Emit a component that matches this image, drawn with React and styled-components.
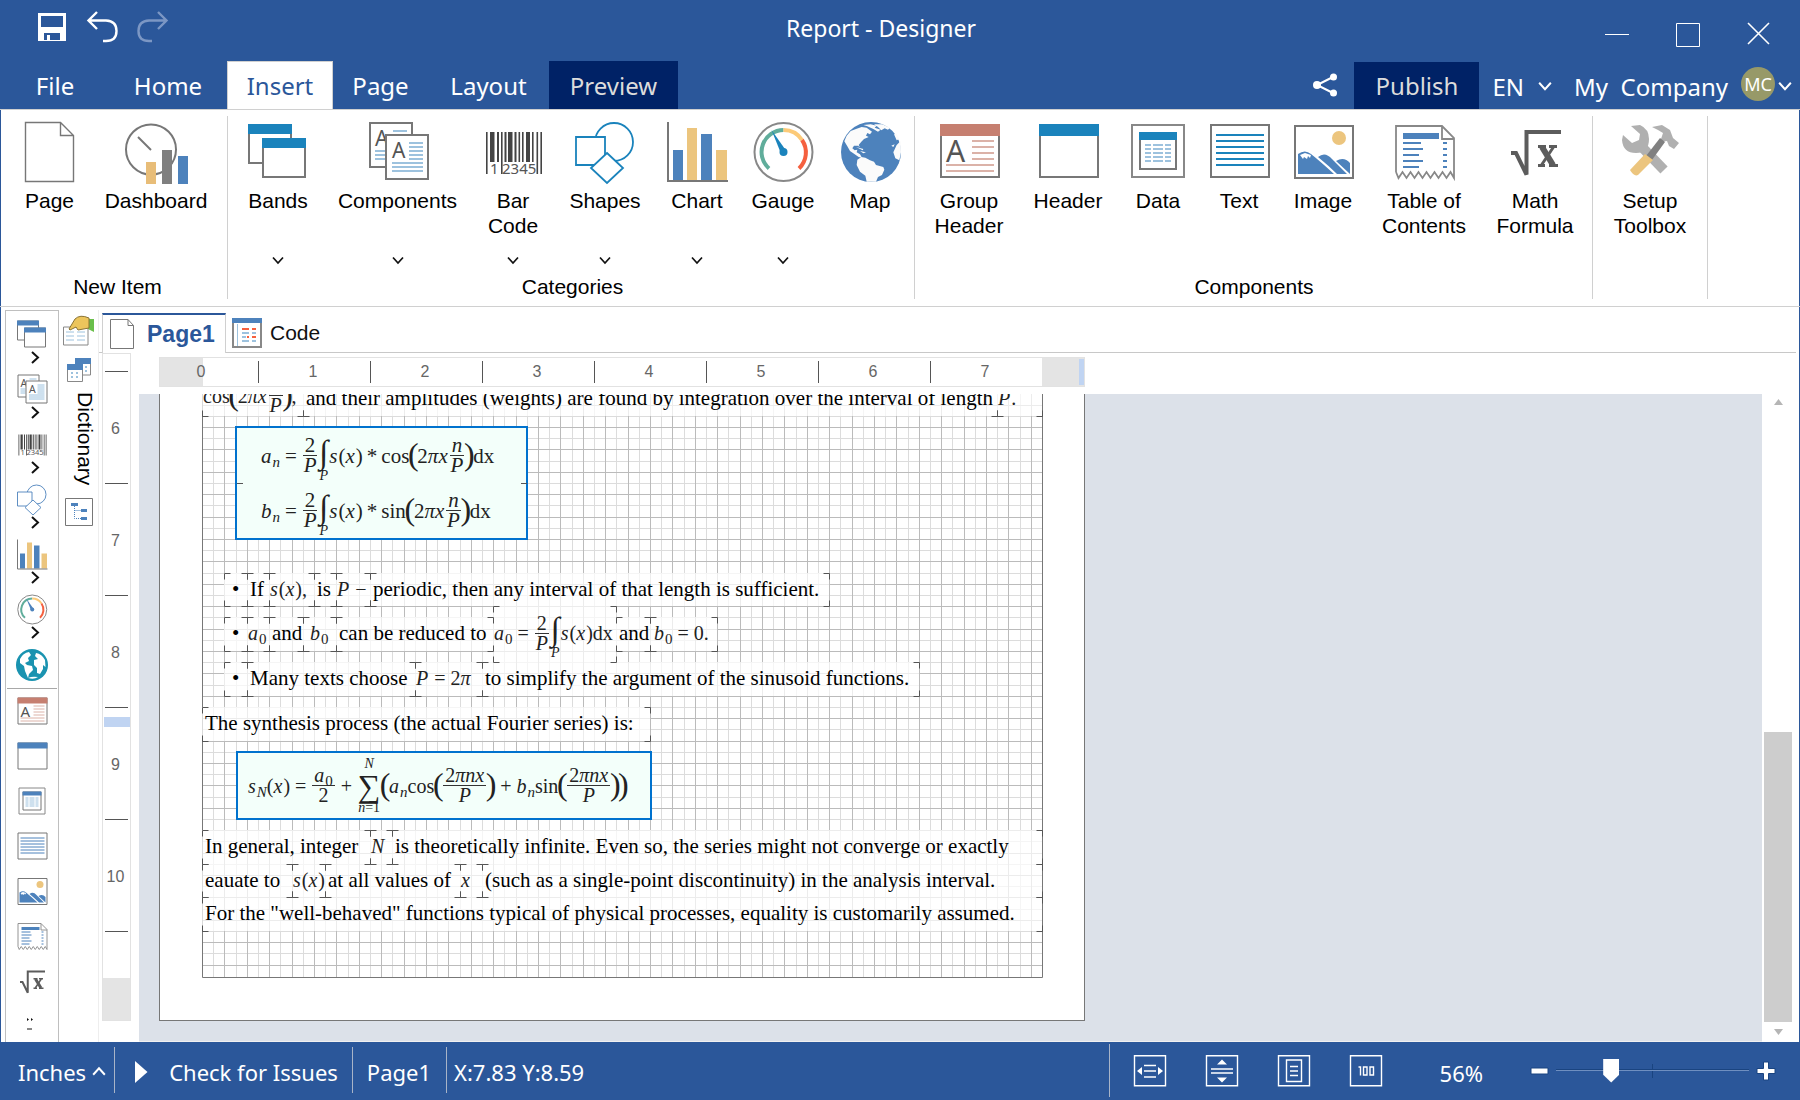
import React from "react";
import styled, { createGlobalStyle, css } from "styled-components";

const BLUE = "#2b579a";
const NAVY = "#002266";
const LINE = "#d0d0d0";
const UI = '"Noto Sans", "Open Sans", sans-serif';
const ARIAL = '"Liberation Sans", Arial, sans-serif';
const TIMES = '"Liberation Serif", "Times New Roman", serif';

const Global = createGlobalStyle`
  * { box-sizing: border-box; }
  body { margin: 0; background: #fff; }
  button { border: 0; background: none; padding: 0; margin: 0; font: inherit; color: inherit; cursor: pointer; }
  svg { display: block; overflow: visible; }
`;

/* ---------- shell ---------- */

const Window = styled.div`
  display: flex;
  flex-direction: column;
  height: 100vh;
  min-height: 720px;
  background: #fff;
  font-family: ${ARIAL};
  color: #000;
  overflow: hidden;
`;

const Row = styled.div`
  display: flex;
  align-items: center;
  gap: ${(p) => p.$gap || 0}px;
`;

/* ---------- title bar and tabs ---------- */

const Top = styled.header`
  flex: none;
  background: ${BLUE};
  color: #fff;
  font-family: ${UI};
`;

const TitleBar = styled.div`
  display: grid;
  grid-template-columns: 1fr auto 1fr;
  height: 61px;
  align-items: center;
  padding: 0 76px 6px 38px;
`;

const Title = styled.h1`
  margin: 0;
  font-size: 23px;
  font-weight: 400;
  line-height: 30px;
`;

const WindowButtons = styled(Row)`
  justify-content: flex-end;
  gap: 47px;
  margin-right: -47px;
  padding-top: 14px;
`;

const TabBar = styled.nav`
  display: flex;
  height: 48px;
  padding: 0 8px 0 1px;
`;

const Tab = styled.button`
  width: ${(p) => p.$w}px;
  font-size: 24px;
  color: #fff;
  border: 1px solid transparent;
  border-bottom: 0;
  line-height: 46px;
  ${(p) => p.$active && css`background: #fff; color: ${BLUE}; border-color: ${LINE};`}
  ${(p) => p.$dark && css`background: ${NAVY}; color: #dcdcdc; border-color: ${NAVY};`}
`;

const Account = styled.div`
  display: flex;
  align-items: center;
  margin-left: auto;
  font-size: 24px;
`;

const ShareButton = styled.button`
  padding: 0 17px;
`;

const Language = styled.button`
  display: flex;
  align-items: center;
  gap: 14px;
  padding: 2px 0 0 13px;
`;

const Company = styled.button`
  display: flex;
  align-items: center;
  gap: 13px;
  padding: 2px 0 0 22px;
  white-space: pre;
`;

const Avatar = styled.span`
  display: grid;
  place-items: center;
  width: 34px;
  height: 34px;
  margin: 0 -10px 4px 0;
  border-radius: 50%;
  background: #979968;
  font-size: 18px;
`;

/* ---------- ribbon ---------- */

const Ribbon = styled.section`
  flex: none;
  display: flex;
  height: 198px;
  padding: 6px 0 7px 1px;
  border: solid ${LINE};
  border-width: 1px 0;
  box-shadow: inset 1px 0 ${BLUE}, inset -1px 0 ${BLUE};
`;

const Group = styled.div`
  display: flex;
  flex-direction: column;
  padding: 5px ${(p) => p.$right}px 0 ${(p) => p.$left}px;
  border-right: 1px solid ${LINE};
`;

const Tools = styled.div`
  display: flex;
  flex: 1;
`;

const Tool = styled.button`
  display: flex;
  flex-direction: column;
  align-items: center;
  width: ${(p) => p.$w}px;
  font-size: 21px;
  line-height: 25px;
  text-align: center;
`;

const ToolLabel = styled.span`
  height: 71px;
  padding-top: 3px;
`;

const GroupLabel = styled.div`
  height: 25px;
  font-size: 21px;
  line-height: 25px;
  text-align: center;
`;

/* ---------- side panels ---------- */

const Main = styled.main`
  flex: 1;
  display: flex;
  min-height: 0;
  padding: 3px 4px 0 5px;
  box-shadow: inset 1px 0 ${BLUE}, inset -1px 0 ${BLUE};
`;

const Toolbox = styled.aside`
  flex: none;
  width: 54px;
  padding: 8px 1px 0;
  border: 1px solid #bfbfbf;
  border-bottom: 0;
  overflow: hidden;
`;

const BoxTool = styled.button`
  display: flex;
  flex-direction: column;
  align-items: center;
  width: 100%;
  height: ${(p) => p.$h}px;
  color: #4d82bc;
`;

const BoxRule = styled.hr`
  height: 1px;
  margin: 0 0 7px;
  border: 0;
  background: #a8a8a8;
`;

const Dock = styled.aside`
  flex: none;
  display: flex;
  flex-direction: column;
  align-items: center;
  width: 39px;
  padding-top: 3px;
`;

const DockTab = styled.button`
  display: flex;
  flex-direction: column;
  align-items: center;
  gap: 10px;
  padding: 11px 0 13px;
  font-size: 21px;
  line-height: 24px;
`;

const Vertical = styled.span`
  padding-left: 12px;
  margin-right: -1px;
  writing-mode: vertical-rl;
`;

/* ---------- workspace ---------- */

const Workspace = styled.section`
  flex: 1;
  display: flex;
  flex-direction: column;
  min-width: 0;
  border-left: 1px solid #eee;
`;

const PageTabs = styled.div`
  display: flex;
  flex: none;
  height: 43px;
  padding: 3px 0 0 3px;
  box-shadow: inset 0 -1px #c8c8c8;
`;

const PageTab = styled.button`
  display: flex;
  align-items: center;
  width: ${(p) => (p.$active ? 124 : 110)}px;
  padding: 0 0 0 ${(p) => (p.$active ? 7 : 6)}px;
  gap: ${(p) => (p.$active ? 13 : 8)}px;
  font-size: 21px;
  color: #111;
  ${(p) =>
    p.$active &&
    css`
      font-size: 23px;
      font-weight: 700;
      color: ${BLUE};
      background: #fff;
      border: 1px solid ${LINE};
      border-top: 2px solid ${BLUE};
      border-bottom: 0;
    `}
`;

const Surface = styled.div`
  flex: 1;
  display: grid;
  grid-template-columns: 40px minmax(0, 1fr) 34px;
  grid-template-rows: 41px minmax(0, 1fr);
  min-height: 0;
`;

const rulerBox = css`
  display: flex;
  border: 1px solid #e2e2e2;
  font-size: 16px;
  color: #666;
`;

const RulerX = styled.div`
  ${rulerBox}
  position: relative;
  grid-column: 2;
  width: 926px;
  height: 30px;
  margin: 4px 0 0 20px;
  padding-left: 43px;
  background: linear-gradient(90deg, #e4e4e4 43px, #fff 43px 882px, #e4e4e4 882px);
`;

const MarkX = styled.span`
  flex: none;
  width: ${(p) => (p.$last ? 56 : 112)}px;
  line-height: 28px;
  background: ${(p) => (p.$last ? "none" : "linear-gradient(#555, #555) 55px 3px / 1px 22px no-repeat")};
`;

const MarkXText = styled.span`
  display: block;
  width: 12px;
  margin-left: -8px;
  text-align: center;
`;

const CursorX = styled.span`
  position: absolute;
  right: 0;
  top: 1px;
  width: 5px;
  height: 26px;
  background: #c0d4f2;
`;

const RulerY = styled.div`
  ${rulerBox}
  position: relative;
  flex-direction: column;
  grid-row: 1 / 3;
  grid-column: 1;
  width: 29px;
  height: 668px;
  margin: 0 0 0 3px;
  padding-top: 17px;
  background: linear-gradient(#fff 624px, #e4e4e4 624px);
`;

const MarkY = styled.span`
  flex: none;
  height: ${(p) => (p.$last ? 1 : 112)}px;
  padding-right: 2px;
  line-height: 115px;
  text-align: center;
  background: linear-gradient(#555, #555) 2px 0 / 23px 1px no-repeat;
`;

const CursorY = styled.span`
  position: absolute;
  left: 1px;
  top: 363px;
  width: 26px;
  height: 10px;
  background: #c0d4f2;
`;

const Canvas = styled.div`
  grid-column: 2;
  grid-row: 2;
  overflow: hidden;
  background: #dce1e9;
  border-bottom: 1px solid #f0f0f0;
`;

const Sheet = styled.div`
  width: 926px;
  height: 627px;
  margin-left: 20px;
  padding: 0 42px;
  background: #fff;
  border: 1px solid #777;
  border-top: 0;
`;

const Printable = styled.div`
  position: relative;
  width: 841px;
  height: 584px;
  font-family: ${TIMES};
  overflow: hidden;
`;

const Layer = styled.svg`
  position: absolute;
  left: 0;
  top: 0;
  pointer-events: none;
`;

/* Report coordinates are grid cells of 0.1 inch; the view shows 11.2 px per cell. */
const cx = (c) => Math.round(c * 11.2);
const cy = (r) => Math.round(r * 11.2 - 0.6);

const Item = styled.div`
  position: absolute;
  left: ${(p) => cx(p.$c0)}px;
  top: ${(p) => cy(p.$r0)}px;
  width: ${(p) => cx(p.$c1) - cx(p.$c0)}px;
  height: ${(p) => cy(p.$r1) - cy(p.$r0)}px;
  display: flex;
  align-items: center;
  padding: 0 0 2px ${(p) => (p.$math ? 1 : 3)}px;
  font-size: ${(p) => (p.$math ? 20 : 21)}px;
  line-height: 24px;
  white-space: nowrap;
  color: ${(p) => (p.$math ? "#222" : "#000")};
  background: rgba(255, 255, 255, 0.72);
`;

const FormulaPanel = styled.div`
  position: absolute;
  left: ${(p) => cx(p.$c0) - 1}px;
  top: ${(p) => cy(p.$r0) - 1}px;
  width: ${(p) => cx(p.$c1) - cx(p.$c0) + 2}px;
  height: ${(p) => cy(p.$r1) - cy(p.$r0) + 2}px;
  display: flex;
  flex-direction: column;
  padding-left: ${(p) => p.$pad}px;
  border: 2px solid #0072ce;
  background: #f3fffa;
  color: #222;
  font-size: ${(p) => p.$size}px;
  line-height: 24px;

  > * {
    flex: 1;
  }
`;

/* ---------- math typesetting ---------- */

const Expr = styled.span`
  display: flex;
  align-items: center;
  white-space: pre;
`;
const V = styled.i`
  padding-right: 1px;
`;
const Sub = styled.sub`
  font-size: 15px;
  line-height: 0;
  vertical-align: -4px;
`;
const Op = styled.span`
  padding: 0 ${(p) => p.$p || 5}px;
`;
const FracBox = styled.span`
  display: inline-flex;
  flex-direction: column;
  align-items: center;
  margin: 0 1px;
  line-height: 19px;
  text-align: center;
`;
const Num = styled.span`
  align-self: stretch;
  padding: 0 2px;
  border-bottom: 1px solid #333;
`;
const Big = styled.span`
  width: 8px;
  font-size: 32px;
  line-height: 24px;
  padding-bottom: 4px;
  display: flex;
  justify-content: center;
`;
const IntegralBox = styled.span`
  display: flex;
  flex-direction: column;
  align-items: center;
  width: 11px;
  padding-top: 4px;
  font-size: 14px;
  line-height: 12px;
`;
const IntegralSign = styled.span`
  font-size: 33px;
  line-height: 36px;
`;
const SumBox = styled.span`
  display: flex;
  flex-direction: column;
  align-items: center;
  width: 24px;
  font-size: 14px;
  line-height: 14px;
`;
const SumSign = styled.span`
  font-size: 32px;
  line-height: 30px;
`;

const Frac = ({ top, bottom }) => (
  <FracBox>
    <Num>{top}</Num>
    <span>{bottom}</span>
  </FracBox>
);
const Integral = () => (
  <IntegralBox>
    <IntegralSign>∫</IntegralSign>
    <i>P</i>
  </IntegralBox>
);
const Fx = ({ name, sub }) => (
  <span>
    <V>{name}</V>
    {sub && <Sub>{sub}</Sub>}(<V>x</V>)
  </span>
);
const Coef = ({ name, sub }) => (
  <span>
    <V>{name}</V>
    <Sub>{sub}</Sub>
  </span>
);

const Coefficient = ({ name, fn }) => (
  <Expr>
    <Coef name={name} sub={<i>n</i>} />
    <Op>=</Op>
    <Frac top="2" bottom={<i>P</i>} />
    <Integral />
    <Fx name="s" />
    <Op $p={4}>*</Op>
    {fn}
    <Big>(</Big>
    <span>2<V>πx</V></span>
    <Frac top={<i>n</i>} bottom={<i>P</i>} />
    <Big>)</Big>dx
  </Expr>
);

const Harmonic = ({ name, fn }) => (
  <>
    <Coef name={name} sub={<i>n</i>} />
    {fn}
    <Big>(</Big>
    <Frac top={<>2<i>πnx</i></>} bottom={<i>P</i>} />
    <Big>)</Big>
  </>
);

/* ---------- report content ---------- */

const ITEMS = [
  [0, 9, -1.5, 2, <Expr key="c">cos<Big>(</Big><span>2<V>πx</V></span><Frac top={<i>n</i>} bottom={<i>P</i>} /><Big>)</Big>,</Expr>, 1],
  [9, 71, -1, 2, "and their amplitudes (weights) are found by integration over the interval of length"],
  [71, 75, -1, 2, <span key="p"><V>P</V>.</span>, 1],

  [2, 4, 16, 19, "bullet"],
  [4, 6, 16, 19, "If"],
  [6, 10, 16, 19, <span key="s"><Fx name="s" />,</span>, 1],
  [10, 12, 16, 19, "is"],
  [12, 15, 16, 19, <span key="m"><V>P</V> −</span>, 1],
  [15, 56, 16, 19, "periodic, then any interval of that length is sufficient."],

  [2, 4, 20, 23, "bullet"],
  [4, 6, 20, 23, <Coef key="a" name="a" sub="0" />, 1],
  [6, 9, 20, 23, "and"],
  [9, 12, 20, 23, <Op key="b" $p={6}><Coef name="b" sub="0" /></Op>, 1],
  [12, 26, 20, 23, "can be reduced to"],
  [26, 37, 19, 24, <Expr key="i"><Coef name="a" sub="0" /><Op>=</Op><Frac top="2" bottom={<i>P</i>} /><Integral /><Fx name="s" />dx</Expr>, 1],
  [37, 40, 20, 23, "and"],
  [40, 46, 20, 23, <Op key="z" $p={3}><Coef name="b" sub="0" /> = 0.</Op>, 1],

  [2, 4, 24, 27, "bullet"],
  [4, 19, 24, 27, "Many texts choose"],
  [19, 25, 24, 27, <span key="q"><V>P</V> = 2<V>π</V></span>, 1],
  [25, 64, 24, 27, "to simplify the argument of the sinusoid functions."],

  [0, 40, 28, 31, "The synthesis process (the actual Fourier series) is:"],

  [0, 15, 39, 42, "In general, integer"],
  [15, 17, 39, 42, <V key="n">N</V>, 1],
  [17, 75, 39, 42, "is theoretically infinite. Even so, the series might not converge or exactly"],
  [0, 8, 42, 45, "eauate to"],
  [8, 11, 42, 45, <Fx key="f" name="s" />, 1],
  [11, 23, 42, 45, "at all values of"],
  [23, 25, 42, 45, <V key="x">x</V>, 1],
  [25, 75, 42, 45, "(such as a single-point discontinuity) in the analysis interval."],
  [0, 75, 45, 48, 'For the "well-behaved" functions typical of physical processes, equality is customarily assumed.'],
];

const Bullet = styled.span`
  padding-left: 5px;
`;

function Grid() {
  const lines = [];
  for (const major of [false, true]) {
    for (let c = 1; c < 75; c += 1)
      if ((c % 2 === 0) === major)
        lines.push(<rect key={`c${c}`} x={cx(c)} y="0" width="1" height="583" fill={major ? "#bbb" : "#dcdcdc"} />);
    for (let r = 1; r < 52; r += 1)
      if ((r % 2 === 1) === major)
        lines.push(<rect key={`r${r}`} x="0" y={cy(r)} width="840" height="1" fill={major ? "#bbb" : "#dcdcdc"} />);
  }
  return (
    <Layer width="841" height="584" aria-hidden="true">
      {lines}
      <path d="M.5 0V583.5H840.5V0" fill="none" stroke="#777" />
    </Layer>
  );
}

function Corners() {
  const d = ITEMS.map(([c0, c1, r0, r1]) => {
    const [l, r, t, b] = [cx(c0) + 0.5, cx(c1) + 0.5, cy(r0) + 0.5, cy(r1) + 0.5];
    return `M${l} ${t + 6}V${t}H${l + 6}M${r - 6} ${t}H${r}V${t + 6}M${l} ${b - 6}V${b}H${l + 6}M${r - 6} ${b}H${r}V${b - 6}`;
  }).join("");
  return (
    <Layer width="841" height="584" aria-hidden="true">
      <path d={d} fill="none" stroke="#555" />
      <path d="M35 89.5H41M319 89.5H325" stroke="#555" />
    </Layer>
  );
}

/* ---------- icons, drawn on a 64 unit square ---------- */

const Icon = ({ name, size = 64 }) => (
  <svg width={size} height={size} viewBox="0 0 64 64" fill="none" aria-hidden="true">
    {ICONS[name]}
  </svg>
);

const G = "#777";
const Y = "#ecc57e";
const B = "#4d82bc";
const Hlines = ({ x1, x2, ys, c, w = 2 }) => (
  <path d={ys.map((y) => `M${x1} ${y}H${x2}`).join("")} stroke={c} strokeWidth={w} />
);
const Letter = ({ x, y, s, children = "A", ...rest }) => (
  <text x={x} y={y} fontSize={s} fontFamily={UI} fill="#555" {...rest}>{children}</text>
);

const ICONS = {
  page: (
    <path d="M7.5 1.5H42.5L55.5 14.5V60.5H7.5ZM42.5 1.5V14.5H55.5" stroke={G} strokeWidth="1.4" />
  ),
  dashboard: (
    <>
      <circle cx="27" cy="28.5" r="25" stroke={G} strokeWidth="2" />
      <path d="M14 16L27 29" stroke={G} strokeWidth="2" />
      <path d="M22 41h10v22h-10z" fill="#e8bd78" />
      <path d="M38 29h10v34h-10z" fill="#7f7f7f" />
      <path d="M54 35h10v28h-10z" fill={B} />
    </>
  ),
  bands: (
    <>
      <path d="M3 4H45V42H3Z" stroke={G} strokeWidth="2" fill="#fff" />
      <path d="M2 3h44v10H2z" fill="currentColor" />
      <path d="M17 18H59V56H17Z" stroke={G} strokeWidth="2" fill="#fff" />
      <path d="M16 17h44v10H16z" fill="currentColor" />
    </>
  ),
  components: (
    <>
      <path d="M4 2H46V46H4Z" stroke={G} strokeWidth="2" fill="#fff" />
      <Letter x="9" y="25" s="21" />
      <Hlines x1={27} x2={41} ys={[10]} c="#9dc2de" />
      <Hlines x1={9} x2={19} ys={[30, 34, 38]} c="#9dc2de" />
      <path d="M20 14H62V58H20Z" stroke={G} strokeWidth="2" fill="#fff" />
      <Letter x="26" y="37" s="21" />
      <Hlines x1={43} x2={57} ys={[22, 26, 30, 34, 38]} c="#9dc2de" />
      <Hlines x1={26} x2={57} ys={[42, 46, 50]} c="#9dc2de" />
    </>
  ),
  barcode: (
    <>
      <path
        d="M5 11h1.6v42H5zM9 11h4.5v30H9zM16 11h2v30h-2zM20 11h1.6v42H20zM23.5 11h2v30h-2zM27 11h4.5v30H27zM33.5 11h2v30h-2zM37.5 11h1.6v30h-1.6zM41 11h1.6v30H41zM45 11h4v30h-4zM51 11h1.6v30H51zM55.5 11h1.6v42h-1.6zM59.4 11h1.6v42h-1.6z"
        fill="#444"
      />
      <Letter x="9" y="52.5" s="15">1</Letter>
      <Letter x="21" y="52.5" s="15">2345</Letter>
    </>
  ),
  shapes: (
    <g stroke="currentColor" strokeWidth="1.8" fill="#fff">
      <circle cx="41" cy="21" r="19" />
      <path d="M3 16H32V44H3Z" />
      <path d="M34 32L50 47L34 62L18 47Z" />
    </g>
  ),
  chart: (
    <>
      <path d="M8 29h10v30H8zM36 13h11v46H36z" fill={B} />
      <path d="M22 7h10v52H22zM51 29h11v30H51z" fill={Y} />
      <path d="M3 1V60H63" stroke={G} strokeWidth="2" />
    </>
  ),
  gauge: (
    <>
      <circle cx="32.500" cy="31" r="29" stroke="#888" strokeWidth="2" />
      <path d="M18 47.5A22 22 0 0 1 32.500 9" stroke="#60ad9b" strokeWidth="4" />
      <path d="M32.500 9A22 22 0 0 1 51 19" stroke="#fcca78" strokeWidth="4" />
      <path d="M51 19A22 22 0 0 1 48 47.5" stroke="#f5603f" strokeWidth="4" />
      <path d="M20.500 9L35 29.5L30 32.5Z" fill="currentColor" />
      <circle cx="32.500" cy="31" r="4" fill="currentColor" />
    </>
  ),
  map: (
    <>
      <circle cx="33" cy="31" r="30" fill={B} />
      <g transform="translate(33 31) scale(.3333) translate(-363 -111)" fill="#fbfbfb">
        <path d="M283 79L290 62L302 48L318 42L335 36L350 38L358 44L366 50L360 58L352 54L348 62L356 66L342 72L334 80L326 90L330 97L324 92L312 92L307 100L314 106L322 104L320 112L330 118L336 128L326 126L312 116L300 108L292 94Z" />
        <path d="M340 30L362 28L380 32L374 38L392 44L384 50L370 42L352 34ZM372 28L396 28L420 38L414 44L404 40L394 46L384 36ZM318 96L340 102L338 106ZM330 108L348 112L340 115Z" />
        <path d="M322 134L334 126L346 128L360 136L372 140L378 150L400 156L403 164L396 180L384 186L378 200L350 200L346 182L330 170L320 150Z" />
        <path d="M452 78L440 90L430 112L436 130L448 136L453 112ZM424 92L434 88L430 96ZM432 58L440 56L448 72L440 76Z" />
      </g>
    </>
  ),
  groupHeader: (
    <>
      <path d="M4 4H62V56H4Z" stroke={G} strokeWidth="2" fill="#fff" />
      <path d="M3 3h60v12H3z" fill="#c67f70" />
      <Letter x="9" y="41" s="30" />
      <Hlines x1={35} x2={57} ys={[20, 26, 32, 38]} c="#dbb2a8" />
      <Hlines x1={9} x2={57} ys={[44, 50]} c="#dbb2a8" />
    </>
  ),
  header: (
    <>
      <path d="M4 4H62V56H4Z" stroke={G} strokeWidth="2" fill="#fff" />
      <path d="M3 3h60v12H3z" fill="currentColor" />
    </>
  ),
  data: (
    <>
      <path d="M6 4H58V56H6Z" stroke="#888" strokeWidth="2" fill="#fff" />
      <path d="M14 12H50V48H14Z" stroke={G} strokeWidth="2" fill="#fff" />
      <path d="M13 11h38v8H13z" fill="currentColor" />
      {[24, 28, 32, 36, 40].map((y) => (
        <path key={y} d={`M19 ${y}h6m2 0h10m2 0h6`} stroke="#9dc2de" strokeWidth="2" />
      ))}
    </>
  ),
  text: (
    <>
      <path d="M4 4H62V56H4Z" stroke={G} strokeWidth="2" fill="#fff" />
      <Hlines x1={9} x2={57} ys={[14, 20, 26, 32, 38, 44]} c="currentColor" />
    </>
  ),
  image: (
    <>
      <path d="M4 5H62V57H4Z" stroke={G} strokeWidth="2" fill="#fff" />
      <circle cx="48" cy="17" r="7" fill={Y} />
      <path d="M7 53V33Q14 28 20 33Q30 41 43 53ZM27 36Q34 30 41 38L56 53H46Q38 45 27 36ZM45 40Q53 35 59 42V53Z" fill={B} />
      <path d="M9 34L14 32L20 34L19 37L17 35L16 38L13 36L12 38Z" fill="#fff" />
    </>
  ),
  toc: (
    <>
      <path
        d="M4 51V5H50L62 17V57L58.500 51L54.500 57L50.500 51L46.500 57L42.500 51L38.500 57L34.500 51L30.500 57L26.500 51L22.500 57L18.500 51L14.500 57L10.500 51L6.500 57L4 51M50 5V18H62"
        stroke="#888"
        strokeWidth="1.8"
      />
      <path d="M11 12h36v6H11z" fill={B} />
      <path d="M11 22h18M11 28h20M11 34h16M11 40h20M11 46h16M51 22h4M51 28h4M51 34h4M51 40h4M51 46h4" stroke={B} strokeWidth="2" />
    </>
  ),
  math: (
    <>
      <path d="M8 32H13L23.500 53.500V11H58" stroke="#5c5c5c" strokeWidth="4" />
      <path d="M35 25.500H43M46 25.500H54M35 44.500H42M46 44.500H55" stroke="#5c5c5c" strokeWidth="3" />
      <path d="M39 26L50 44" stroke="#5c5c5c" strokeWidth="6" />
      <path d="M50.500 26L38.500 44" stroke="#5c5c5c" strokeWidth="3" />
    </>
  ),
  setup: (
    <>
      <path d="M22 24L46 49" stroke="#b0b0b0" strokeWidth="10" />
      <path d="M13 5L22 4Q31 8 31 18Q31 32 18 32Q5 32 4 19L5 14L14 22L21 19L22 13Z" fill="#b0b0b0" />
      <path d="M34 6L44 4L52 9L55 17L61 22L56 28L51 25L49 20L42 21L45 12L40 9Z" fill="#b0b0b0" />
      <path d="M28 35L42 17L47 21L34 39Z" fill="#808080" />
      <path d="M12 49L27 33L35 39L20 54Q16 56 12 49Z" fill={Y} />
    </>
  ),
  globe: (
    <>
      <circle cx="32" cy="32" r="32" fill="#1a93b0" />
      <path d="M8 20Q14 8 26 6L30 12L24 18L26 24L18 28L22 32L32 34L34 42L26 50L24 58L18 44L16 34L8 28Z" fill="#fff" />
      <path d="M40 8Q52 10 58 22L59 36L54 32L54 40L48 50L42 48L42 38L36 32L36 22L44 20L38 14Z" fill="#fff" />
      <path d="M24 58Q32 54 44 56Q36 62 24 58Z" fill="#fff" />
    </>
  ),
};

const Chevron = ({ dir = "down", w = 12, color = "#111" }) => {
  const d = { down: "M1 1.500L6 7L11 1.500", up: "M1 7.500L6 2L11 7.500" }[dir];
  return (
    <svg width={w} height={(w * 9) / 12} viewBox="0 0 12 9" aria-hidden="true">
      <path d={d} fill="none" stroke={color} strokeWidth="1.700" />
    </svg>
  );
};

const BoxChevron = styled.svg`
  margin-left: 6px;
`;

const NEW_ITEM = [["page", "Page", 77], ["dashboard", "Dashboard", 136]];
const CATEGORIES = [
  ["bands", "Bands", 86, 1],
  ["components", "Components", 153, 1],
  ["barcode", "Bar Code", 78, 1],
  ["shapes", "Shapes", 106, 1],
  ["chart", "Chart", 78, 1],
  ["gauge", "Gauge", 94, 1],
  ["map", "Map", 80],
];
const COMPONENTS = [
  ["groupHeader", "Group Header", 98],
  ["header", "Header", 100],
  ["data", "Data", 80],
  ["text", "Text", 82],
  ["image", "Image", 86],
  ["toc", "Table of Contents", 116],
  ["math", "Math Formula", 106],
];

const ToolColor = styled.div`
  display: contents;
  color: #1a83bc;
`;

const Black = styled.span`
  color: #000;
`;

const RibbonGroup = ({ label, tools, left, right }) => (
  <Group $left={left} $right={right}>
    <Tools>
      {tools.map(([icon, text, w, menu]) => (
        <ToolColor key={text}>
          <Tool $w={w}>
            <Icon name={icon} />
            <ToolLabel><Black>{text}</Black></ToolLabel>
            {menu && <Chevron />}
          </Tool>
        </ToolColor>
      ))}
    </Tools>
    <GroupLabel>{label}</GroupLabel>
  </Group>
);

/* ---------- scroll bar ---------- */

const ScrollBar = styled.div`
  grid-column: 3;
  grid-row: 2;
  display: flex;
  flex-direction: column;
  align-items: center;
  padding: 5px 4px 7px 2px;
`;
const Track = styled.div`
  flex: 1;
  display: flex;
  flex-direction: column;
  justify-content: flex-end;
  width: 28px;
  padding: 6px 0 7px;
`;
const Thumb = styled.div`
  flex: 0 0 290px;
  background: #cdcdcd;
`;

/* ---------- status bar ---------- */

const Status = styled.footer`
  flex: none;
  display: flex;
  height: 58px;
  padding-right: 24px;
  background: ${BLUE};
  color: #fff;
  font-family: ${UI};
  font-size: 22px;
`;
const Cell = styled.div`
  display: flex;
  align-items: center;
  margin: 5px 0 7px;
  padding: 3px ${(p) => p.$r}px 0 ${(p) => p.$l}px;
  border-right: ${(p) => (p.$last ? 0 : 1)}px solid #a8b4c8;
`;
const StatusButton = styled.button`
  display: flex;
  align-items: center;
  gap: ${(p) => p.$gap}px;
`;
const ZoomCell = styled.div`
  display: flex;
  align-items: center;
  margin: 2px 0 3px auto;
  padding-left: 23px;
  border-left: 1px solid #a8b4c8;
`;
const ZoomValue = styled.label`
  margin: 4px 47px 0 57px;
`;
const Views = styled(Row)`
  gap: 38px;
`;
const Slider = styled.input`
  appearance: none;
  width: 193px;
  height: 26px;
  margin: 0 7px 0 7px;
  background: linear-gradient(#1a4480, #1a4480) 0 11px / 100% 1px no-repeat,
    linear-gradient(#6f8fc0, #6f8fc0) 0 12px / 100% 1px no-repeat,
    linear-gradient(#1a4480, #1a4480) 50% 6px / 1px 14px no-repeat;
  &::-webkit-slider-thumb {
    appearance: none;
    width: 16px;
    height: 24px;
    background: #fff;
    clip-path: polygon(0 0, 100% 0, 100% 68%, 50% 100%, 0 68%);
  }
`;

const ViewIcon = ({ children }) => (
  <svg width="34" height="32" viewBox="0 0 34 32" fill="none" stroke="#fff" strokeWidth="1.400" aria-hidden="true">
    <path d="M1.500 .7H32.500V30.700H1.500Z" />
    {children}
  </svg>
);

export default function App() {
  return (
    <Window>
      <Global />
      <Top>
        <TitleBar>
          <Row $gap={20}>
            <button aria-label="Save">
              <svg width="28" height="30" viewBox="0 0 28 30" aria-hidden="true">
                <path d="M0 0H28V28H0ZM3 3V14H25V3ZM6 20V27H22V20Z" fill="#fff" fillRule="evenodd" />
                <path d="M9 22h3v5H9z" fill="#fff" />
              </svg>
            </button>
            <button aria-label="Undo">
              <svg width="31" height="32" viewBox="0 0 31 32" fill="none" stroke="#fff" strokeWidth="2.400" aria-hidden="true">
                <path d="M11 0L2.500 8.500L11 17M3 8.500H20Q30.500 9 30.500 19T20 29H17" />
              </svg>
            </button>
            <button aria-label="Redo" disabled>
              <svg width="31" height="32" viewBox="0 0 31 32" fill="none" stroke="#7c97c4" strokeWidth="2.400" aria-hidden="true">
                <path d="M21 0L29.500 8.500L21 17M29 8.500H12Q1.500 9 1.500 19T12 29H15" />
              </svg>
            </button>
          </Row>
          <Title>Report - Designer</Title>
          <WindowButtons>
            <button aria-label="Minimize">
              <svg width="24" height="24" aria-hidden="true"><path d="M0 11.500H24" stroke="#fff" /></svg>
            </button>
            <button aria-label="Maximize">
              <svg width="24" height="24" fill="none" aria-hidden="true"><path d="M.5 .5H23.500V23.500H.5Z" stroke="#fff" /></svg>
            </button>
            <button aria-label="Close">
              <svg width="24" height="24" aria-hidden="true"><path d="M1 0L22 21M22 0L1 21" stroke="#fff" strokeWidth="1.600" /></svg>
            </button>
          </WindowButtons>
        </TitleBar>
        <TabBar>
          <Tab $w={108}>File</Tab>
          <Tab $w={118}>Home</Tab>
          <Tab $w={106} $active>Insert</Tab>
          <Tab $w={95}>Page</Tab>
          <Tab $w={121}>Layout</Tab>
          <Tab $w={129} $dark>Preview</Tab>
          <Account>
            <ShareButton aria-label="Share">
              <svg width="24" height="24" viewBox="0 0 24 24" aria-hidden="true">
                <path d="M20 4L4 12L20 20" fill="none" stroke="#fff" strokeWidth="2" />
                <circle cx="20.500" cy="4" r="3.500" fill="#fff" />
                <circle cx="4" cy="12" r="4" fill="#fff" />
                <circle cx="20.500" cy="20" r="3.500" fill="#fff" />
              </svg>
            </ShareButton>
            <Tab $w={125} $dark>Publish</Tab>
            <Language>EN <Chevron w={14} color="#fff" /></Language>
            <Company>
              <span>My{"  "}Company</span>
              <Avatar>MC</Avatar>
              <Chevron w={14} color="#fff" />
            </Company>
          </Account>
        </TabBar>
      </Top>

      <Ribbon>
        <RibbonGroup label="New Item" tools={NEW_ITEM} left={10} right={3} />
        <RibbonGroup label="Categories" tools={CATEGORIES} left={7} right={4} />
        <RibbonGroup label="Components" tools={COMPONENTS} left={5} right={4} />
        <RibbonGroup label="" tools={[["setup", "Setup Toolbox", 94]]} left={10} right={10} />
      </Ribbon>

      <Main>
        <Toolbox>
          {CATEGORIES.map(([icon, text, , menu]) => (
            <BoxTool key={text} $h={menu ? 55 : 39} aria-label={text}>
              <Icon name={icon === "map" ? "globe" : icon} size={32} />
              {menu && (
                <BoxChevron width="8" height="13" aria-hidden="true">
                  <path d="M1 1L7 6.500L1 12" fill="none" stroke="#111" strokeWidth="2" />
                </BoxChevron>
              )}
            </BoxTool>
          ))}
          <BoxRule />
          {COMPONENTS.map(([icon, text]) => (
            <BoxTool key={text} $h={45} aria-label={text}>
              <Icon name={icon} size={32} />
            </BoxTool>
          ))}
          <BoxTool $h={45} aria-label="More tools">
            <svg width="12" height="14" viewBox="0 0 12 14" aria-hidden="true">
              <path d="M1 7l2 1.500L1 10zM5 7l2 1.500L5 10z" fill="#111" />
              <path d="M1 18h5" stroke="#111" />
            </svg>
          </BoxTool>
        </Toolbox>

        <Dock>
          <button aria-label="Properties">
            <svg width="34" height="34" viewBox="0 0 34 34" aria-hidden="true">
              <path d="M1.500 14H26V32H1.500Z" fill="#fff" stroke="#888" />
              <path d="M4 19h8M15 19h8M4 23h8M15 23h8M4 27h8M15 27h8" stroke="#9dc2de" />
              <path d="M26 6h6v13l-6-3z" fill="#6abf4b" />
              <path d="M7 16L13 6Q18 1 27 5V15L16 17L14 14L8 17Z" fill="#ecc55c" stroke="#8a7335" />
            </svg>
          </button>
          <DockTab>
            <svg width="24" height="24" viewBox="0 0 24 24" aria-hidden="true">
              <path d="M8.500 1H23.500V17H8.500Z" fill="#fff" stroke="#888" />
              <path d="M8 0h16v6H8z" fill={B} />
              <path d="M.5 7H15.500V23.500H.5Z" fill="#fff" stroke="#888" />
              <path d="M0 6h16v6H0z" fill={B} />
              <path d="M4 15h2M9 15h2M4 19h2M9 19h2M18 9h2M18 13h2" stroke="#9dc2de" strokeWidth="2" />
            </svg>
            <Vertical>Dictionary</Vertical>
          </DockTab>
          <button aria-label="Report tree">
            <svg width="28" height="28" viewBox="0 0 28 28" fill="none" aria-hidden="true">
              <path d="M.5 .5H27.500V27.500H.5Z" stroke="#777" />
              <path d="M6 5h7v3H6zM16 11h6v3h-6zM16 19h6v3h-6z" fill={B} />
              <path d="M9.500 8V20.500H16M9.500 12.500H16" stroke={B} strokeDasharray="1 1" />
            </svg>
          </button>
        </Dock>

        <Workspace>
          <PageTabs role="tablist">
            <PageTab $active role="tab">
              <svg width="24" height="30" viewBox="0 0 24 30" fill="none" aria-hidden="true">
                <path d="M.5 .5H18L23.500 6.500V29.500H.5ZM18 .5V6.500H23.500" stroke="#777" />
              </svg>
              Page1
            </PageTab>
            <PageTab role="tab">
              <svg width="30" height="30" viewBox="0 0 30 30" aria-hidden="true">
                <path d="M1 1H29V29H1Z" fill="#fff" stroke="#888" strokeWidth="2" />
                <path d="M0 0h30v5H0z" fill={B} />
                <path d="M5.500 6V28" stroke="#9dc2de" />
                <path d="M10 11h7M20 11h4M15 19h2M20 19h4" stroke="#f5603f" strokeWidth="2" />
                <path d="M10 15h7M20 15h4M10 19h4M10 23h7M20 23h4" stroke="#9dc2de" strokeWidth="2" />
              </svg>
              Code
            </PageTab>
          </PageTabs>

          <Surface>
            <RulerY>
              {[6, 7, 8, 9, 10].map((n) => <MarkY key={n}>{n}</MarkY>)}
              <MarkY $last />
              <CursorY />
            </RulerY>
            <RulerX>
              {[0, 1, 2, 3, 4, 5, 6, 7].map((n) => (
                <MarkX key={n} $last={n === 7}><MarkXText>{n}</MarkXText></MarkX>
              ))}
              <CursorX />
            </RulerX>
            <Canvas>
              <Sheet>
                <Printable>
                  <Grid />
                  {ITEMS.map(([c0, c1, r0, r1, body, math]) => (
                    <Item key={`${c0}-${r0}`} $c0={c0} $c1={c1} $r0={r0} $r1={r1} $math={math}>
                      {body === "bullet" ? <Bullet>•</Bullet> : body}
                    </Item>
                  ))}
                  <FormulaPanel $c0={3} $c1={29} $r0={3} $r1={13} $pad={24} $size={21}>
                    <Coefficient name="a" fn="cos" />
                    <Coefficient name="b" fn="sin" />
                  </FormulaPanel>
                  <FormulaPanel $c0={3.1} $c1={40.1} $r0={32} $r1={38} $pad={10} $size={20}>
                    <Expr>
                      <Fx name="s" sub={<i>N</i>} />
                      <Op>=</Op>
                      <Frac top={<Coef name="a" sub="0" />} bottom="2" />
                      <Op>+</Op>
                      <SumBox>
                        <i>N</i>
                        <SumSign>∑</SumSign>
                        <span><i>n</i>=1</span>
                      </SumBox>
                      <Big>(</Big>
                      <Harmonic name="a" fn="cos" />
                      <Op>+</Op>
                      <Harmonic name="b" fn="sin" />
                      <Big>)</Big>
                    </Expr>
                  </FormulaPanel>
                  <Corners />
                </Printable>
              </Sheet>
            </Canvas>
            <ScrollBar>
              <svg width="9" height="6" aria-hidden="true"><path d="M0 6L4.500 0L9 6Z" fill="#b5b5b5" /></svg>
              <Track><Thumb /></Track>
              <svg width="9" height="6" aria-hidden="true"><path d="M0 0H9L4.500 6Z" fill="#b5b5b5" /></svg>
            </ScrollBar>
          </Surface>
        </Workspace>
      </Main>

      <Status>
        <Cell $l={18} $r={8}>
          <StatusButton $gap={6}>Inches <Chevron dir="up" w={14} color="#fff" /></StatusButton>
        </Cell>
        <Cell $l={20} $r={14}>
          <StatusButton $gap={21}>
            <svg width="13" height="22" aria-hidden="true"><path d="M0 0L12.500 11L0 22Z" fill="#fff" /></svg>
            Check for Issues
          </StatusButton>
        </Cell>
        <Cell $l={14} $r={15}>Page1</Cell>
        <Cell $l={7} $r={0} $last>X:7.83 Y:8.59</Cell>
        <ZoomCell>
          <Views>
            <button aria-label="Page width">
              <ViewIcon>
                <path d="M11 10.500H23M11 16H23M11 22H23" />
                <path d="M9 12V20L4 16ZM25 12V20L30 16Z" fill="#fff" stroke="none" />
              </ViewIcon>
            </button>
            <button aria-label="Page height">
              <ViewIcon>
                <path d="M6 14H28M6 18H28" />
                <path d="M12 9.500H22L17 4.500ZM12 22.500H22L17 27.500Z" fill="#fff" stroke="none" />
              </ViewIcon>
            </button>
            <button aria-label="Whole page">
              <ViewIcon><path d="M9.500 5H24.500V26.500H9.500ZM13 11.500H21M13 16H21M13 20.500H21" /></ViewIcon>
            </button>
            <button aria-label="Actual size">
              <ViewIcon><path d="M9.500 12H11.500V20.500M14.500 12H18V20H14.500ZM21 12H24.500V20H21Z" /></ViewIcon>
            </button>
          </Views>
          <ZoomValue htmlFor="zoom">56%</ZoomValue>
          <button aria-label="Zoom out">
            <svg width="19" height="8" aria-hidden="true"><path d="M1 1H18V7H1Z" fill="#fff" stroke="#1a4480" /></svg>
          </button>
          <Slider id="zoom" type="range" min="10" max="190" defaultValue="58" />
          <button aria-label="Zoom in">
            <svg width="20" height="20" aria-hidden="true">
              <path d="M7.500 1H12.500V7.500H19V12.500H12.500V19H7.500V12.500H1V7.500H7.500Z" fill="#fff" stroke="#1a4480" />
            </svg>
          </button>
        </ZoomCell>
      </Status>
    </Window>
  );
}
